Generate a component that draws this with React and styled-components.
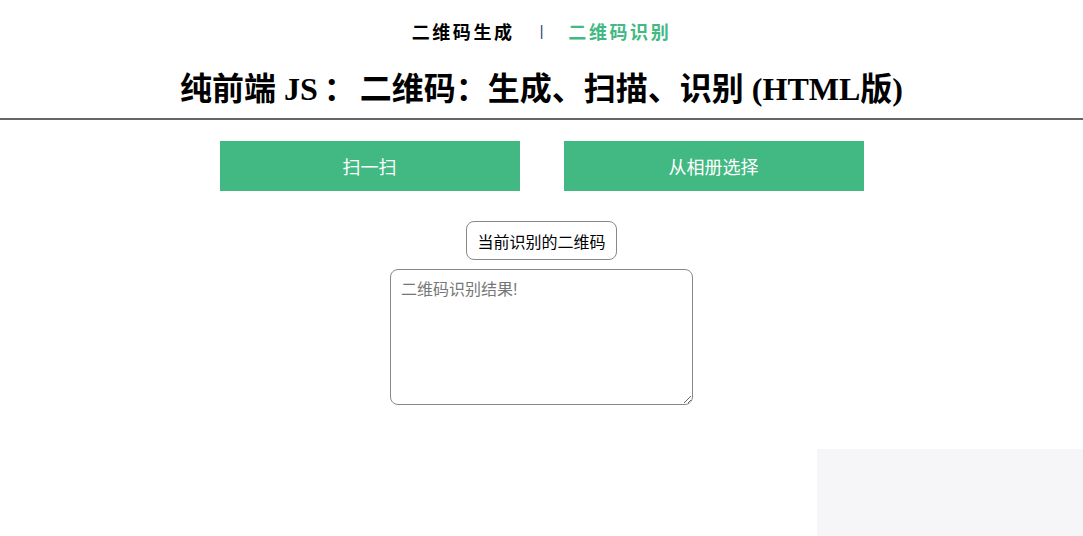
import React from "react";
import styled, { createGlobalStyle } from "styled-components";

const Global = createGlobalStyle`
  html, body { margin: 0; padding: 0; background: #fff; }
  body { font-family: "Liberation Serif", "Noto Sans CJK SC", serif; color: #000; }
`;

const Page = styled.div`
  display: flex;
  flex-direction: column;
  align-items: stretch;
`;

const Nav = styled.nav`
  display: flex;
  justify-content: center;
  align-items: center;
  gap: 25px;
  padding-top: 18px;
  height: 26px;
`;

const NavLink = styled.a`
  font-family: "Liberation Serif", "Noto Sans CJK SC", serif;
  font-weight: bold;
  font-size: 18px;
  letter-spacing: 2.6px;
  color: ${(p) => (p.$active ? "#42b983" : "#000")};
  text-decoration: none;
`;

const Sep = styled.span`
  font-size: 14px;
  color: #2c3e50;
  font-family: "Liberation Sans", sans-serif;
`;

const Title = styled.h1`
  margin: 0;
  padding-top: 24px;
  height: 50px;
  text-align: center;
  font-size: 32px;
  font-weight: bold;
  line-height: 42px;
  border-bottom: 2px solid #666;
`;

const Colon = styled.span`
  margin: 0 4px 0 6px;
`;

const Buttons = styled.div`
  display: flex;
  justify-content: center;
  gap: 44px;
  margin-top: 21px;
`;

const GreenButton = styled.button`
  width: 300px;
  height: 50px;
  border: none;
  background: #42b983;
  color: #fff;
  font-family: "Liberation Sans", "Noto Sans CJK SC", sans-serif;
  font-size: 18px;
  cursor: pointer;
`;

const Result = styled.div`
  display: flex;
  flex-direction: column;
  align-items: center;
  gap: 9px;
  margin-top: 30px;
`;

const Label = styled.button`
  height: 39px;
  padding: 0 10px;
  border: 1px solid #888;
  border-radius: 8px;
  background: #fff;
  color: #000;
  font-family: "Liberation Sans", "Noto Sans CJK SC", sans-serif;
  font-size: 16px;
`;

const Output = styled.textarea`
  box-sizing: border-box;
  width: 303px;
  height: 136px;
  padding: 10px;
  border: 1px solid #888;
  border-radius: 8px;
  font-family: "Liberation Sans", "Noto Sans CJK SC", sans-serif;
  font-size: 16px;
  line-height: 20px;
  resize: both;
  &::placeholder { color: #777; }
`;

const Corner = styled.div`
  position: fixed;
  right: 0;
  bottom: 0;
  width: 266px;
  height: 87px;
  background: #f6f6f8;
`;

export default function App() {
  return (
    <Page>
      <Global />
      <Nav>
        <NavLink href="#">二维码生成</NavLink>
        <Sep>|</Sep>
        <NavLink href="#" $active>二维码识别</NavLink>
      </Nav>
      <Title>
        纯前端 JS<Colon>：</Colon>二维码：生成、扫描、识别 (HTML版)
      </Title>
      <Buttons>
        <GreenButton>扫一扫</GreenButton>
        <GreenButton>从相册选择</GreenButton>
      </Buttons>
      <Result>
        <Label>当前识别的二维码</Label>
        <Output placeholder="二维码识别结果!" />
      </Result>
      <Corner />
    </Page>
  );
}
